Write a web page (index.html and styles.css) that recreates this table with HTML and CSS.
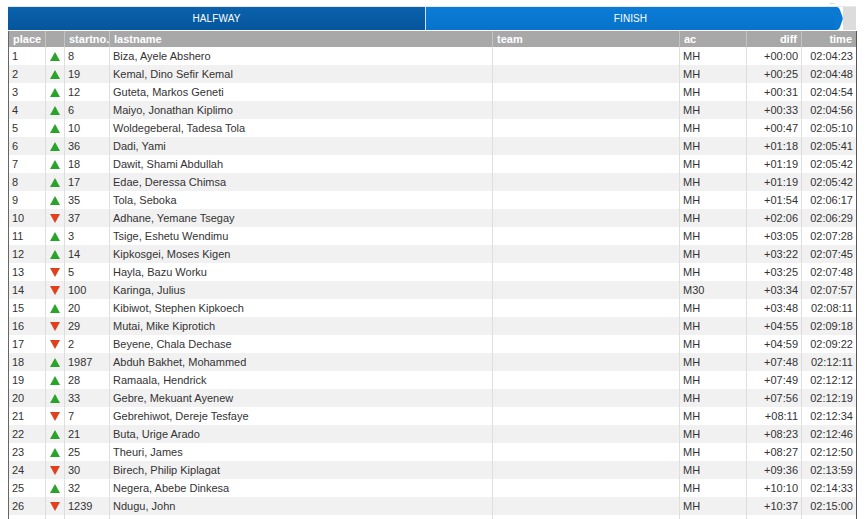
FILE: index.html
```html
<!DOCTYPE html>
<html>
<head>
<meta charset="utf-8">
<link rel="stylesheet" href="styles.css">
</head>
<body>
<div class="page">
  <div class="topdots">…</div>
  <div class="tabs">
    <div class="tab tab-half">HALFWAY</div>
    <div class="tab tab-finish">FINISH
      <svg class="tab-arrow" width="8" height="23" viewBox="0 0 8 23"><path d="M0 0 H2 Q4 0 5 3 L7.5 10 Q8 11.5 7.5 13 L5 20 Q4 23 2 23 H0 Z" fill="#0a79d2"/></svg>
    </div>
    <div class="tab-end"></div>
  </div>
  <table class="results">
    <colgroup>
      <col class="c-place"><col class="c-arrow"><col class="c-start"><col class="c-name"><col class="c-team"><col class="c-ac"><col class="c-diff"><col class="c-time">
    </colgroup>
    <thead>
      <tr><th>place</th><th></th><th>startno.</th><th>lastname</th><th>team</th><th>ac</th><th class="r">diff</th><th class="r">time</th></tr>
    </thead>
    <tbody>
      <tr><td>1</td><td><span class="up"></span></td><td>8</td><td>Biza, Ayele Abshero</td><td></td><td>MH</td><td class="r">+00:00</td><td class="r">02:04:23</td></tr>
      <tr><td>2</td><td><span class="up"></span></td><td>19</td><td>Kemal, Dino Sefir Kemal</td><td></td><td>MH</td><td class="r">+00:25</td><td class="r">02:04:48</td></tr>
      <tr><td>3</td><td><span class="up"></span></td><td>12</td><td>Guteta, Markos Geneti</td><td></td><td>MH</td><td class="r">+00:31</td><td class="r">02:04:54</td></tr>
      <tr><td>4</td><td><span class="up"></span></td><td>6</td><td>Maiyo, Jonathan Kiplimo</td><td></td><td>MH</td><td class="r">+00:33</td><td class="r">02:04:56</td></tr>
      <tr><td>5</td><td><span class="up"></span></td><td>10</td><td>Woldegeberal, Tadesa Tola</td><td></td><td>MH</td><td class="r">+00:47</td><td class="r">02:05:10</td></tr>
      <tr><td>6</td><td><span class="up"></span></td><td>36</td><td>Dadi, Yami</td><td></td><td>MH</td><td class="r">+01:18</td><td class="r">02:05:41</td></tr>
      <tr><td>7</td><td><span class="up"></span></td><td>18</td><td>Dawit, Shami Abdullah</td><td></td><td>MH</td><td class="r">+01:19</td><td class="r">02:05:42</td></tr>
      <tr><td>8</td><td><span class="up"></span></td><td>17</td><td>Edae, Deressa Chimsa</td><td></td><td>MH</td><td class="r">+01:19</td><td class="r">02:05:42</td></tr>
      <tr><td>9</td><td><span class="up"></span></td><td>35</td><td>Tola, Seboka</td><td></td><td>MH</td><td class="r">+01:54</td><td class="r">02:06:17</td></tr>
      <tr><td>10</td><td><span class="down"></span></td><td>37</td><td>Adhane, Yemane Tsegay</td><td></td><td>MH</td><td class="r">+02:06</td><td class="r">02:06:29</td></tr>
      <tr><td>11</td><td><span class="up"></span></td><td>3</td><td>Tsige, Eshetu Wendimu</td><td></td><td>MH</td><td class="r">+03:05</td><td class="r">02:07:28</td></tr>
      <tr><td>12</td><td><span class="up"></span></td><td>14</td><td>Kipkosgei, Moses Kigen</td><td></td><td>MH</td><td class="r">+03:22</td><td class="r">02:07:45</td></tr>
      <tr><td>13</td><td><span class="down"></span></td><td>5</td><td>Hayla, Bazu Worku</td><td></td><td>MH</td><td class="r">+03:25</td><td class="r">02:07:48</td></tr>
      <tr><td>14</td><td><span class="down"></span></td><td>100</td><td>Karinga, Julius</td><td></td><td>M30</td><td class="r">+03:34</td><td class="r">02:07:57</td></tr>
      <tr><td>15</td><td><span class="up"></span></td><td>20</td><td>Kibiwot, Stephen Kipkoech</td><td></td><td>MH</td><td class="r">+03:48</td><td class="r">02:08:11</td></tr>
      <tr><td>16</td><td><span class="down"></span></td><td>29</td><td>Mutai, Mike Kiprotich</td><td></td><td>MH</td><td class="r">+04:55</td><td class="r">02:09:18</td></tr>
      <tr><td>17</td><td><span class="down"></span></td><td>2</td><td>Beyene, Chala Dechase</td><td></td><td>MH</td><td class="r">+04:59</td><td class="r">02:09:22</td></tr>
      <tr><td>18</td><td><span class="up"></span></td><td>1987</td><td>Abduh Bakhet, Mohammed</td><td></td><td>MH</td><td class="r">+07:48</td><td class="r">02:12:11</td></tr>
      <tr><td>19</td><td><span class="up"></span></td><td>28</td><td>Ramaala, Hendrick</td><td></td><td>MH</td><td class="r">+07:49</td><td class="r">02:12:12</td></tr>
      <tr><td>20</td><td><span class="up"></span></td><td>33</td><td>Gebre, Mekuant Ayenew</td><td></td><td>MH</td><td class="r">+07:56</td><td class="r">02:12:19</td></tr>
      <tr><td>21</td><td><span class="down"></span></td><td>7</td><td>Gebrehiwot, Dereje Tesfaye</td><td></td><td>MH</td><td class="r">+08:11</td><td class="r">02:12:34</td></tr>
      <tr><td>22</td><td><span class="up"></span></td><td>21</td><td>Buta, Urige Arado</td><td></td><td>MH</td><td class="r">+08:23</td><td class="r">02:12:46</td></tr>
      <tr><td>23</td><td><span class="up"></span></td><td>25</td><td>Theuri, James</td><td></td><td>MH</td><td class="r">+08:27</td><td class="r">02:12:50</td></tr>
      <tr><td>24</td><td><span class="down"></span></td><td>30</td><td>Birech, Philip Kiplagat</td><td></td><td>MH</td><td class="r">+09:36</td><td class="r">02:13:59</td></tr>
      <tr><td>25</td><td><span class="up"></span></td><td>32</td><td>Negera, Abebe Dinkesa</td><td></td><td>MH</td><td class="r">+10:10</td><td class="r">02:14:33</td></tr>
      <tr><td>26</td><td><span class="down"></span></td><td>1239</td><td>Ndugu, John</td><td></td><td>MH</td><td class="r">+10:37</td><td class="r">02:15:00</td></tr>
      <tr><td>&nbsp;</td><td></td><td></td><td></td><td></td><td></td><td></td><td></td></tr>
    </tbody>
  </table>
</div>
</body>
</html>
```
FILE: styles.css
```css
html, body {
  margin: 0;
  padding: 0;
  background: #fff;
  overflow: hidden;
}
.page {
  position: relative;
  padding: 6px 0 0 8px;
  width: 848px;
  font-family: "Liberation Sans", Arial, sans-serif;
}
.topdots {
  position: absolute;
  left: 829px;
  top: 0;
  font-size: 6px;
  line-height: 5px;
  height: 5px;
  color: #000;
}
.tabs {
  display: flex;
  height: 23px;
  border-top: 1px solid #e8e8e8;
  margin-bottom: 1px;
}
.tab {
  display: flex;
  align-items: center;
  justify-content: center;
  color: #fff;
  font-size: 10px;
  letter-spacing: 0.1px;
}
.tab-half {
  width: 417px;
  background: linear-gradient(#0a62ad, #05569c);
  border-right: 1px solid #cfe3f3;
}
.tab-finish {
  position: relative;
  width: 409px;
  background: linear-gradient(#0b7cd6, #0873cb);
}
.tab-arrow {
  position: absolute;
  right: -8px;
  top: 0;
}
.tab-end {
  margin-left: 8px;
  width: 13px;
  background: #dcdcdc;
}
.results {
  border-collapse: collapse;
  table-layout: fixed;
  width: 848px;
  font-size: 11px;
  color: #333;
  border-left: 1px solid #666;
  border-right: 1px solid #555;
}
.c-place { width: 37px; }
.c-arrow { width: 19px; }
.c-start { width: 45px; }
.c-name { width: 383px; }
.c-team { width: 187px; }
.c-ac { width: 67px; }
.c-diff { width: 55px; }
.c-time { width: 55px; }
th {
  background: #a8a8a8;
  color: #fff;
  font-weight: bold;
  text-align: left;
  height: 16px;
  padding: 0 4px;
  border-left: 1px solid #c4c4c4;
  font-size: 11px;
  line-height: 16px;
}
th:first-child { border-left: none; }
td {
  height: 18px;
  padding: 0 4px 0 3px;
  border-left: 1px solid #dedede;
  line-height: 18px;
  white-space: nowrap;
  overflow: hidden;
}
td.r { padding: 0 3px 0 4px; }
td:first-child { border-left: none; }
tbody tr:nth-child(even) td { background: #f1f1f1; }
.r { text-align: right; }
.up, .down {
  display: inline-block;
  width: 0;
  height: 0;
  border-left: 5px solid transparent;
  border-right: 5px solid transparent;
  vertical-align: -1px;
  margin-left: 1px;
}
.up { border-bottom: 9px solid #2aa32a; }
.down { border-top: 9px solid #e0401e; }
```
